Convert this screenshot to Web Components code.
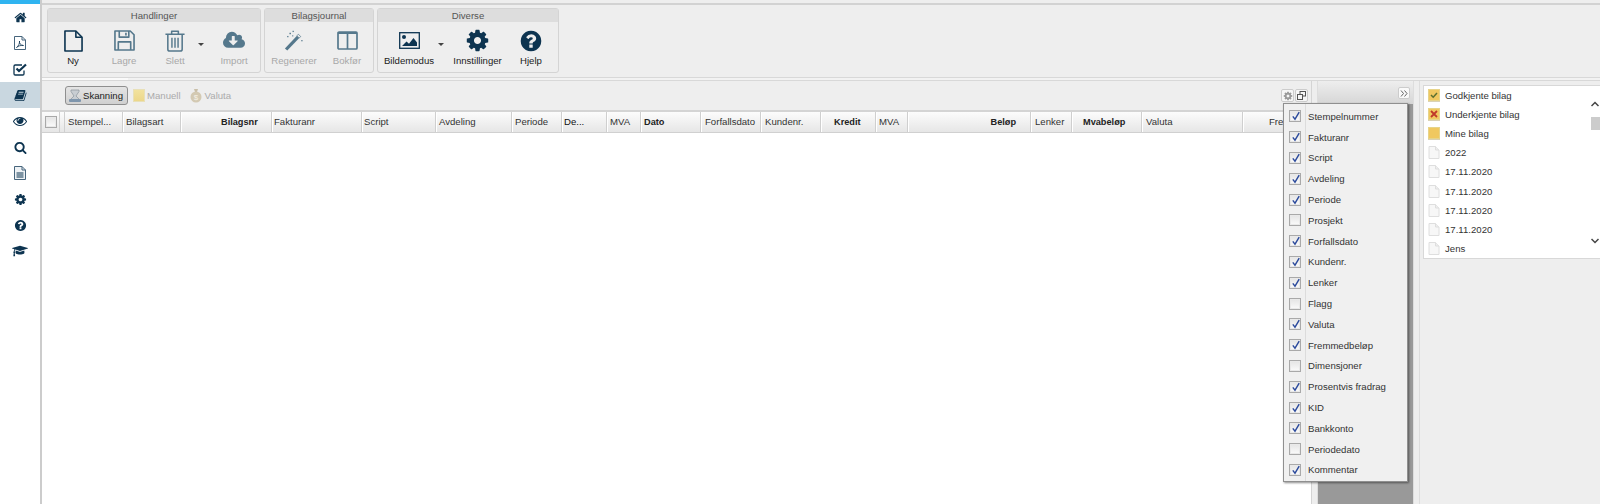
<!DOCTYPE html>
<html lang="nb"><head><meta charset="utf-8"><title>Bilag</title>
<style>
html,body{margin:0;padding:0;height:504px;overflow:hidden;background:#fff;font:10px "Liberation Sans",Arial,sans-serif;color:#222}
</style></head><body>
<app-shell>
  <side-nav slot="nav"></side-nav>
  <tool-ribbon slot="ribbon">
    <ribbon-group label="Handlinger" w="214">
      <ribbon-btn label="Ny" icon="new" w="50"></ribbon-btn>
      <ribbon-btn label="Lagre" icon="save" w="52" off></ribbon-btn>
      <ribbon-btn label="Slett" icon="trash" w="50" off></ribbon-btn>
      <drop-caret></drop-caret>
      <ribbon-btn label="Import" icon="cloud" w="52" off></ribbon-btn>
    </ribbon-group>
    <ribbon-group label="Bilagsjournal" w="110">
      <ribbon-btn label="Regenerer" icon="wand" w="58" off></ribbon-btn>
      <ribbon-btn label="Bokfør" icon="cols" w="48" off></ribbon-btn>
    </ribbon-group>
    <ribbon-group label="Diverse" w="182">
      <ribbon-btn label="Bildemodus" icon="image" w="62"></ribbon-btn>
      <drop-caret></drop-caret>
      <ribbon-btn label="Innstillinger" icon="cog" w="59"></ribbon-btn>
      <ribbon-btn label="Hjelp" icon="help" w="48"></ribbon-btn>
    </ribbon-group>
  </tool-ribbon>
  <scan-panel slot="main"></scan-panel>
  <mid-panel slot="mid"></mid-panel>
  <doc-panel slot="docs"></doc-panel>
</app-shell>
<script>
const P={
home:['0 0 1792 1792','M1472 992v480q0 26-19 45t-45 19h-384v-384h-256v384h-384q-26 0-45-19t-19-45v-480q0-1 .5-3t.5-3l575-474 575 474q1 2 1 6zm223-69l-62 74q-8 9-21 11h-3q-13 0-21-7l-692-577-692 577q-12 8-24 7-13-2-21-11l-62-74q-8-10-7-23.5t11-21.5l719-599q32-26 76-26t76 26l244 204v-195q0-14 9-23t23-9h192q14 0 23 9t9 23v408l219 182q10 8 11 21.5t-7 23.5z'],
book:['0 0 1792 1792','M1703 478q40 57 18 129l-275 906q-19 64-76.5 107.5t-122.5 43.5h-923q-77 0-148.5-53.5t-99.5-131.5q-24-67-2-127 0-4 3-27t4-37q1-8-3-21.5t-3-19.5q2-11 8-21t16.5-23.5 16.5-23.5q23-38 45-91.5t30-91.5q3-10 .5-30t-.5-28q3-11 17-28t17-23q21-36 42-92t25-90q1-9-2.5-32t.5-28q4-13 22-30.5t22-22.5q19-26 42.5-84.5t27.5-96.5q1-8-3-25.5t-2-26.5q2-8 9-18t18-23 17-21q8-12 16.5-30.5t15-35 16-36 19.5-32 26.5-23.5 36-11.5 47.5 5.5l-1 3q38-9 51-9h761q74 0 114 56t18 130l-274 906q-36 119-71.5 153.5t-128.5 34.5h-869q-27 0-38 15-11 16-1 43 24 70 144 70h923q29 0 56-15.5t35-41.5l300-987q7-22 5-57 38 15 59 43zm-1064 2q-4 13 2 22.5t20 9.5h608q13 0 25.5-9.5t16.5-22.5l21-64q4-13-2-22.5t-20-9.5h-608q-13 0-25.5 9.5t-16.5 22.5zm-83 256q-4 13 2 22.5t20 9.5h608q13 0 25.5-9.5t16.5-22.5l21-64q4-13-2-22.5t-20-9.5h-608q-13 0-25.5 9.5t-16.5 22.5z'],
eye:['0 0 1792 1792','M1664 960q-152-236-381-353 61 104 61 225 0 185-131.5 316.5t-316.5 131.5-316.5-131.5-131.5-316.5q0-121 61-225-229 117-381 353 133 205 333.5 326.5t434.5 121.5 434.5-121.5 333.5-326.5zm-720-384q0-20-14-34t-34-14q-125 0-214.5 89.5t-89.5 214.5q0 20 14 34t34 14 34-14 14-34q0-86 61-147t147-61q20 0 34-14t14-34zm848 384q0 34-20 69-140 230-376.5 368.5t-499.5 138.5-499.5-139-376.5-368q-20-35-20-69t20-69q140-229 376.5-368t499.5-139 499.5 139 376.5 368q20 35 20 69z'],
search:['0 0 1792 1792','M1216 832q0-185-131.5-316.5t-316.5-131.5-316.5 131.5-131.5 316.5 131.5 316.5 316.5 131.5 316.5-131.5 131.5-316.5zm512 832q0 52-38 90t-90 38q-54 0-90-38l-343-342q-179 124-399 124-143 0-273.5-55.5t-225-150-150-225-55.5-273.5 55.5-273.5 150-225 225-150 273.5-55.5 273.5 55.5 225 150 150 225 55.5 273.5q0 220-124 399l343 343q37 37 37 90z'],
cog:['0 0 1792 1792','M1152 896q0-106-75-181t-181-75-181 75-75 181 75 181 181 75 181-75 75-181zm512-109v222q0 12-8 23t-20 13l-185 28q-19 54-39 91 35 50 107 138 10 12 10 25t-9 23q-27 37-99 108t-94 71q-12 0-26-9l-138-108q-44 23-91 38-16 136-29 186-7 28-36 28h-222q-14 0-24.5-8.5t-11.5-21.5l-28-184q-49-16-90-37l-141 107q-10 9-25 9-14 0-25-11-126-114-165-168-7-10-7-23 0-12 8-23 15-21 51-66.5t54-70.5q-27-50-41-99l-183-27q-13-2-21-12.5t-8-23.5v-222q0-12 8-23t19-13l186-28q14-46 39-92-40-57-107-138-10-12-10-24 0-10 9-23 26-36 98.5-107.5t94.5-71.5q13 0 26 10l138 107q44-23 91-38 16-136 29-186 7-28 36-28h222q14 0 24.5 8.5t11.5 21.5l28 184q49 16 90 37l142-107q9-9 24-9 13 0 25 10 129 119 165 170 7 8 7 22 0 12-8 23-15 21-51 66.5t-54 70.5q26 50 41 98l183 28q13 2 21 12.5t8 23.5z'],
help:['0 0 1792 1792','M1024 1376v-192q0-14-9-23t-23-9h-192q-14 0-23 9t-9 23v192q0 14 9 23t23 9h192q14 0 23-9t9-23zm256-672q0-88-55.5-163t-138.5-116-170-41q-243 0-371 213-15 24 8 42l132 100q7 6 19 6 16 0 25-12 53-68 86-92 34-24 86-24 48 0 85.5 26t37.5 59q0 38-20 61t-68 45q-63 28-115.5 86.5t-52.5 125.5v36q0 14 9 23t23 9h192q14 0 23-9t9-23q0-19 21.5-49.5t54.5-49.5q32-18 49-28.5t46-35 44.5-48 28-60.5 12.5-81zm384 192q0 209-103 385.5t-279.5 279.5-385.5 103-385.5-103-279.5-279.5-103-385.5 103-385.5 279.5-279.5 385.5-103 385.5 103 279.5 279.5 103 385.5z'],
cap:['0 0 2304 1792','M1774 836l18 316q4 69-82 128t-235 93.5-323 34.5-323-34.5-235-93.5-82-128l18-316 574 181q22 7 48 7t48-7zm530-324q0 23-22 31l-1120 352q-4 1-10 1t-10-1l-652-206q-43 34-71 111.5t-34 178.5q63 36 63 109 0 69-58 107l58 433q2 14-8 25-9 11-24 11h-192q-15 0-24-11-10-11-8-25l58-433q-58-38-58-107 0-73 65-111 11-207 98-330l-333-104q-22-8-22-31t22-31l1120-352q4-1 10-1t10 1l1120 352q22 8 22 31z'],
cloud:['0 0 1920 1792','M1280 928q0-14-9-23t-23-9h-224v-352q0-13-9.5-22.5t-22.5-9.5h-192q-13 0-22.5 9.5t-9.5 22.5v352h-224q-13 0-22.5 9.5t-9.5 22.5q0 14 9 23l352 352q9 9 23 9t23-9l351-351q10-12 10-24zm640 224q0 159-112.5 271.5t-271.5 112.5h-1088q-185 0-316.5-131.5t-131.5-316.5q0-130 70-240t188-165q-2-30-2-43 0-212 150-362t362-150q156 0 285.5 87t188.5 231q71-62 166-62 106 0 181 75t75 181q0 76-41 138 130 31 213.5 135.5t83.5 238.5z']
};
const fill=(k,w,h,c)=>`<svg width="${w}" height="${h}" viewBox="${P[k][0]}" fill="${c}"><path d="${P[k][1]}"/></svg>`;
const S={
new:c=>`<svg width="19" height="22" viewBox="0 0 20 23" fill="none" stroke="${c}" stroke-width="1.7" stroke-linejoin="round"><path d="M1 1h11.500L19 7.500V22H1z"/><path d="M12.500 1v6.500H19"/></svg>`,
save:c=>`<svg width="21" height="21" viewBox="0 0 22 22" fill="none" stroke="${c}" stroke-width="1.7" stroke-linejoin="round"><path d="M1 1h16l4 4v16H1z"/><path d="M5.500 1v6.500h10V1M4.500 21v-8.500h13V21"/><path d="M12.500 2.800v3" /></svg>`,
trash:c=>`<svg width="20" height="22" viewBox="0 0 20 23" fill="none" stroke="${c}" stroke-width="1.600" stroke-linejoin="round"><path d="M0 4.500h20M6.500 4.500V1.200h7v3.300M2.500 4.500V20a2 2 0 0 0 2 2h11a2 2 0 0 0 2-2V4.500"/><path d="M6.800 8v10.500M10 8v10.500M13.200 8v10.500" stroke-width="1.500"/></svg>`,
cloud:c=>fill('cloud',22,21,c),
wand:c=>`<svg width="20" height="21" viewBox="0 0 22 23"><path d="M1 20.200 15.800 4.600l2.600 2.500L3.600 22.600z" fill="${c}"/><path d="M14.200 6.200 15.800 4.600l2.600 2.500-1.600 1.600z" fill="#eee" stroke="${c}" stroke-width=".7"/><g fill="${c}"><rect x="6" y="3" width="1.600" height="1.600"/><rect x="9.400" y=".8" width="1.400" height="1.400"/><rect x="3.500" y="6.500" width="1.400" height="1.400"/><rect x="9" y="5.800" width="1.200" height="1.200"/><rect x="19" y="11" width="1.400" height="1.400"/></g></svg>`,
cols:c=>`<svg width="21" height="19" viewBox="0 0 21 19" fill="none" stroke="${c}" stroke-width="1.700"><rect x="1" y="1" width="19" height="17" rx="1"/><path d="M10.500 1v17"/><path d="M1 2h19" stroke-width="2"/></svg>`,
image:c=>`<svg width="21" height="17" viewBox="0 0 21 17"><rect x=".7" y=".7" width="19.600" height="15.600" fill="none" stroke="${c}" stroke-width="1.300"/><circle cx="5" cy="5" r="2" fill="${c}"/><path d="M3 14l4.500-4.500 2.500 2.300L14.500 6l3.500 4.500V14z" fill="${c}"/></svg>`,
cog:c=>fill('cog',25,25,c),
help:c=>fill('help',24,24,c)
};
const navC='#0d3450';
const tpl=h=>{const t=document.createElement('template');t.innerHTML=h;return t};
class Base extends HTMLElement{constructor(){super();this.attachShadow({mode:'open'})}
 put(h){this.shadowRoot.appendChild(tpl(h).content.cloneNode(true))}}

customElements.define('app-shell',class extends Base{connectedCallback(){this.put(`<style>
:host{display:flex;width:1600px;height:504px;overflow:hidden;position:relative}
.nav{width:40px;flex:none}
.r{flex:1;min-width:0;display:flex;flex-direction:column;background:#eee;border-left:2px solid #ccc}
.row{flex:1;display:flex;min-height:0}
</style><div class="nav"><slot name="nav"></slot></div>
<div class="r"><slot name="ribbon"></slot><div class="row"><slot name="main"></slot><slot name="mid"></slot><slot name="docs"></slot></div></div>`)}});

customElements.define('side-nav',class extends Base{connectedCallback(){
 const pdf=`<svg width="12" height="14" viewBox="0 0 12 14" fill="none" stroke="#47657c" stroke-width="1"><path d="M.5.500h7.500l3.500 3.500v9.500H.5z"/><path d="M8 .5V4h3.500"/><path d="M2.500 11.500c2-1 3.300-4.500 3-6.500-.5 2 1 4.500 4 4.500-2.500-.5-5.500.5-7 2z" stroke="#0d3450" stroke-width=".8"/></svg>`;
 const chk=`<svg width="14" height="13" viewBox="0 0 14 13" fill="none" stroke="${navC}"><path d="M11 7.500v3.300a1.200 1.200 0 0 1-1.200 1.200H2.200A1.200 1.200 0 0 1 1 10.800V3.200A1.200 1.200 0 0 1 2.200 2H9" stroke-width="1.300"/><path d="M3.500 5.500 6 8l7-6.500" stroke-width="2.200"/></svg>`;
 const doc=`<svg width="12" height="14" viewBox="0 0 12 14" fill="none" stroke="#47657c"><path d="M.5.500h7.500l3.500 3.500v9.500H.5z" fill="#eef2f5"/><path d="M8 .5V4h3.500"/><path d="M2.500 7h7M2.500 9h7M2.500 11h7" stroke="#0d3450"/></svg>`;
 const items=[fill('home',13,13,navC),pdf,chk,fill('book',13,13,navC),fill('eye',14,14,navC),fill('search',13,13,navC),doc,fill('cog',13,13,navC),fill('help',13,13,navC),fill('cap',16,14,navC)];
 this.put(`<style>:host{display:block;background:#fff;height:504px}
.top{height:4px;background:#2fb4f0}
.i{height:26px;display:flex;align-items:center;justify-content:center}
.a{background:#c9d7e0}</style><div class="top"></div>`+items.map((s,i)=>`<div class="i${i==3?' a':''}">${s}</div>`).join(''))}});

customElements.define('tool-ribbon',class extends Base{connectedCallback(){this.put(`<style>
:host{display:block;height:78px;box-sizing:border-box;border-top:2px solid #d2d2d2;margin-top:3px;background:#eee;position:relative;flex:none}
.g{display:flex;gap:3px;padding:3px 0 0 5px;box-sizing:border-box}
.s{position:absolute;left:0;right:0;top:72px;height:2px;border-top:1px solid #d8d8d8;border-bottom:1px solid #d8d8d8;background:#f2f2f2}
.s i{display:block;width:86px;height:2px;background:#fafafa}
</style><div class="g"><slot></slot></div><div class="s"><i></i></div>`)}});

customElements.define('ribbon-group',class extends Base{connectedCallback(){this.put(`<style>
:host{display:block;width:${this.getAttribute('w')}px;height:65px;box-sizing:border-box;border:1px solid #d4d4d4;border-radius:3px;background:#eee}
.h{height:13px;line-height:13px;background:#ddd;text-align:center;color:#555;font-size:9.6px}
.b{display:flex}
</style><div class="h">${this.getAttribute('label')}</div><div class="b"><slot></slot></div>`)}});

customElements.define('ribbon-btn',class extends Base{connectedCallback(){const off=this.hasAttribute('off');const c=off?'#55788c':navC;
 this.put(`<style>
:host{display:flex;flex-direction:column;align-items:center;width:${this.getAttribute('w')}px;flex:none;color:${off?'#a8a8a8':'#222'};font-size:9.6px}
.ic{height:25px;margin-top:6px;display:flex;align-items:center;justify-content:center}
.t{margin-top:2px;line-height:12px;white-space:nowrap}
</style><div class="ic">${S[this.getAttribute('icon')](c)}</div><div class="t">${this.getAttribute('label')}</div>`)}});

customElements.define('drop-caret',class extends Base{connectedCallback(){this.put(`<style>
:host{display:block;width:8px;flex:none;position:relative}
i{position:absolute;left:-2px;top:21px;border:3px solid transparent;border-top:3px solid #444;border-bottom:0}
</style><i></i>`)}});

customElements.define('check-box',class extends Base{connectedCallback(){const on=this.hasAttribute('on');this.put(`<style>
:host{display:block;width:12px;height:12px;box-sizing:border-box;border:1px solid #a9a9a9;background:linear-gradient(#e4e4e4,#fbfbfb);box-shadow:inset 0 0 0 1px #e9e9e9;position:relative}
svg{position:absolute;left:1px;top:0}
</style>${on?'<svg width="10" height="10" viewBox="0 0 10 10" fill="none" stroke="#2b4a9c" stroke-width="1.400"><path d="M1.800 5.300 4 8.200 8.200 1.200"/></svg>':''}`)}});

customElements.define('scan-panel',class extends Base{connectedCallback(){
 const cols=[['Stempel...',58,3],['Bilagsart',58,3],['Bilagsnr',91,40,1],['Fakturanr',90,2],['Script',74,2],['Avdeling',76,3],['Periode',50,3],['De...',45,2,2],['MVA',34,3],['Dato',60,3,1],['Forfallsdato',60,4],['Kundenr.',60,4],['Kredit',55,13,1],['MVA',31.5,3],['Beløp',123.5,83,1],['Lenker',41,4],['Mvabeløp',70,11,1],['Valuta',101,4],['Fremmedbeløp',70,26]];
 this.put(`<style>
:host{display:flex;flex-direction:column;width:1270px;flex:none;background:#fff;border-right:1px solid #d4d4d4;position:relative;box-sizing:border-box}
.tb{height:31px;background:#eee;display:flex;align-items:center;border-bottom:2px solid #d4d4d4;padding-left:23px;gap:5px;font-size:9.6px;color:#aaa;position:relative;box-sizing:border-box}
.btn{height:19px;width:63px;box-sizing:border-box;border:1px solid #8f8f8f;border-radius:3px;background:linear-gradient(#e4e4e4,#d0d0d0);color:#222;display:flex;align-items:center;gap:1px;padding-left:2px}
.it{display:flex;align-items:center;gap:2px}
.mn{width:12px;height:13px;background:linear-gradient(#f2e29e,#ecd78a);border:1px solid #e8e0b8;box-sizing:border-box}
.cor{position:absolute;right:3px;top:8px;display:flex;gap:1px}
.cor b{display:flex;align-items:center;justify-content:center;width:13px;height:13px;box-sizing:border-box;border:1px solid #ccc;background:#f6f6f6;border-radius:2px}
.hd{display:flex;height:21px;box-sizing:border-box;background:linear-gradient(#fcfcfc,#e6e6e6);border-bottom:1px solid #d0d0d0;overflow:hidden;font-size:9.6px;color:#333}
.c{flex:none;box-sizing:border-box;height:20px;line-height:20px;border-right:1px solid #cfcfcf;box-shadow:1px 0 0 #fff;white-space:nowrap;overflow:hidden}
.k{flex:none;box-sizing:border-box;display:flex;align-items:center;justify-content:center;height:20px;border-right:1px solid #cfcfcf}
.bd{flex:1;background:#fff}
</style>
<div class="tb"><div class="btn"><svg width="14" height="14" viewBox="0 0 14 14"><path d="M3 1h8v1.500L8 7l3 3v1.500H3V10l3-3-3-4.500z" fill="#c8cdd2" stroke="#8a949c" stroke-width=".7"/><rect x="1" y="10" width="12" height="3" rx="1" fill="#7f96ad"/></svg><span>Skanning</span></div>
<div class="it"><i class="mn"></i><span>Manuell</span></div>
<div class="it" style="margin-left:3px"><svg width="14" height="15" viewBox="0 0 14 15"><path d="M5 1h4L8 4h-2z" fill="#c9bfa8"/><circle cx="7" cy="9" r="5.500" fill="#d3c9b2"/><text x="7" y="12" font-size="8" text-anchor="middle" fill="#f5f1e6" font-family="Liberation Sans">$</text></svg><span>Valuta</span></div>
<div class="cor"><b>${fill('cog',10,10,'#9a9a9a')}</b><b><svg width="9" height="9" viewBox="0 0 9 9" fill="none" stroke="#555"><rect x="3" y=".5" width="5.500" height="4.500"/><rect x=".5" y="3.500" width="5" height="5" fill="#f6f6f6"/></svg></b></div></div>
<div class="hd"><div class="k" style="width:18px"><check-box></check-box></div><div class="k" style="width:5px"></div>
${cols.map(([t,w,p,b])=>`<div class="c" style="width:${w}px;padding-left:${p}px;${b==1?'font-weight:bold;font-size:9.2px;color:#222;':b==2?'color:#111;':''}">${t}</div>`).join('')}</div>
<div class="bd"></div>
<col-menu></col-menu>`)}});

customElements.define('col-menu',class extends Base{connectedCallback(){
 const r=[['Stempelnummer',1],['Fakturanr',1],['Script',1],['Avdeling',1],['Periode',1],['Prosjekt',0],['Forfallsdato',1],['Kundenr.',1],['Lenker',1],['Flagg',0],['Valuta',1],['Fremmedbeløp',1],['Dimensjoner',0],['Prosentvis fradrag',1],['KID',1],['Bankkonto',1],['Periodedato',0],['Kommentar',1]];
 this.put(`<style>
:host{position:absolute;left:1241px;top:22px;width:125px;height:379px;box-sizing:border-box;border:1px solid #8f8f8f;background:#f0f0f0;box-shadow:1px 1px 2px rgba(0,0,0,.45);z-index:5;padding-top:2px;font-size:9.6px;color:#333;
background-image:linear-gradient(#dcdcdc,#dcdcdc);background-size:1px 100%;background-position:21px 0;background-repeat:no-repeat}
.m{height:20.8px;display:flex;align-items:center;padding-left:5px;gap:7px}
</style>${r.map(([t,o])=>`<div class="m"><check-box ${o?'on':''}></check-box><span>${t}</span></div>`).join('')}`)}});

customElements.define('mid-panel',class extends Base{connectedCallback(){this.put(`<style>
:host{display:flex;flex-direction:column;width:97px;flex:none;margin-left:5px;background:#999;border-left:1px solid #ddd;border-right:1px solid #ddd;position:relative;box-sizing:border-box}
.h{height:23px;background:linear-gradient(#eee,#d6d6d6)}
.x{position:absolute;right:3px;top:6px;width:12px;height:12px;box-sizing:border-box;border:1px solid #ccc;background:#fafafa;display:flex;align-items:center;justify-content:center;border-radius:2px}
</style><div class="h"></div><div class="x"><svg width="8" height="7" viewBox="0 0 8 7" fill="none" stroke="#555" stroke-width=".9"><path d="M1 .5l2.500 3-2.500 3M4.500 .5l2.500 3-2.500 3"/></svg></div>`)}});

customElements.define('doc-panel',class extends Base{connectedCallback(){
 const y=(inner)=>`<svg width="12" height="13" viewBox="0 0 12 13"><rect x=".5" y=".5" width="11" height="11" fill="#f0c860" stroke="#e7d48a"/><path d="M.5 12.500h11" stroke="#b5a56a" stroke-dasharray="1 1"/>${inner}</svg>`;
 const pg=`<svg width="12" height="13" viewBox="0 0 12 13"><path d="M1 .5h6.500L11 4v8.500H1z" fill="#f7f7f7" stroke="#dedede"/><path d="M7.500.5V4H11" fill="#eee" stroke="#dedede"/></svg>`;
 const rows=[[y('<path d="M3 6l2.200 2.200L9 4" fill="none" stroke="#5c7030" stroke-width="1.500"/>'),'Godkjente bilag'],[y('<path d="M3 3l6 6M9 3l-6 6" stroke="#c0392b" stroke-width="1.800"/>'),'Underkjente bilag'],[y(''),'Mine bilag'],[pg,'2022'],[pg,'17.11.2020'],[pg,'17.11.2020'],[pg,'17.11.2020'],[pg,'17.11.2020'],[pg,'Jens']];
 this.put(`<style>
:host{display:block;flex:1;margin-left:5px;border-left:1px solid #ddd;padding:4px 0 0 3px;box-sizing:border-box;position:relative}
.l{height:174px;background:#fff;border:1px solid #d8d8d8;border-right:0;box-sizing:border-box;position:relative;font-size:9.6px;color:#333}
.r{height:19.1px;display:flex;align-items:center;padding-left:4px;gap:5px}
.sb{position:absolute;right:0;top:0;bottom:0;width:10px;background:#fff}
.th{position:absolute;right:0;top:31px;width:9px;height:13px;background:#ccc}
.sb svg{position:absolute;left:1px}
</style><div class="l">${rows.map(([i,t])=>`<div class="r">${i}<span>${t}</span></div>`).join('')}
<div class="sb"><svg style="top:15px" width="8" height="6" viewBox="0 0 8 6" fill="none" stroke="#444" stroke-width="1.500"><path d="M.5 5 4 1.500 7.500 5"/></svg><div class="th"></div><svg style="top:152px" width="8" height="6" viewBox="0 0 8 6" fill="none" stroke="#444" stroke-width="1.500"><path d="M.5 1 4 4.500 7.500 1"/></svg></div></div>`)}});
</script>
</body></html>
